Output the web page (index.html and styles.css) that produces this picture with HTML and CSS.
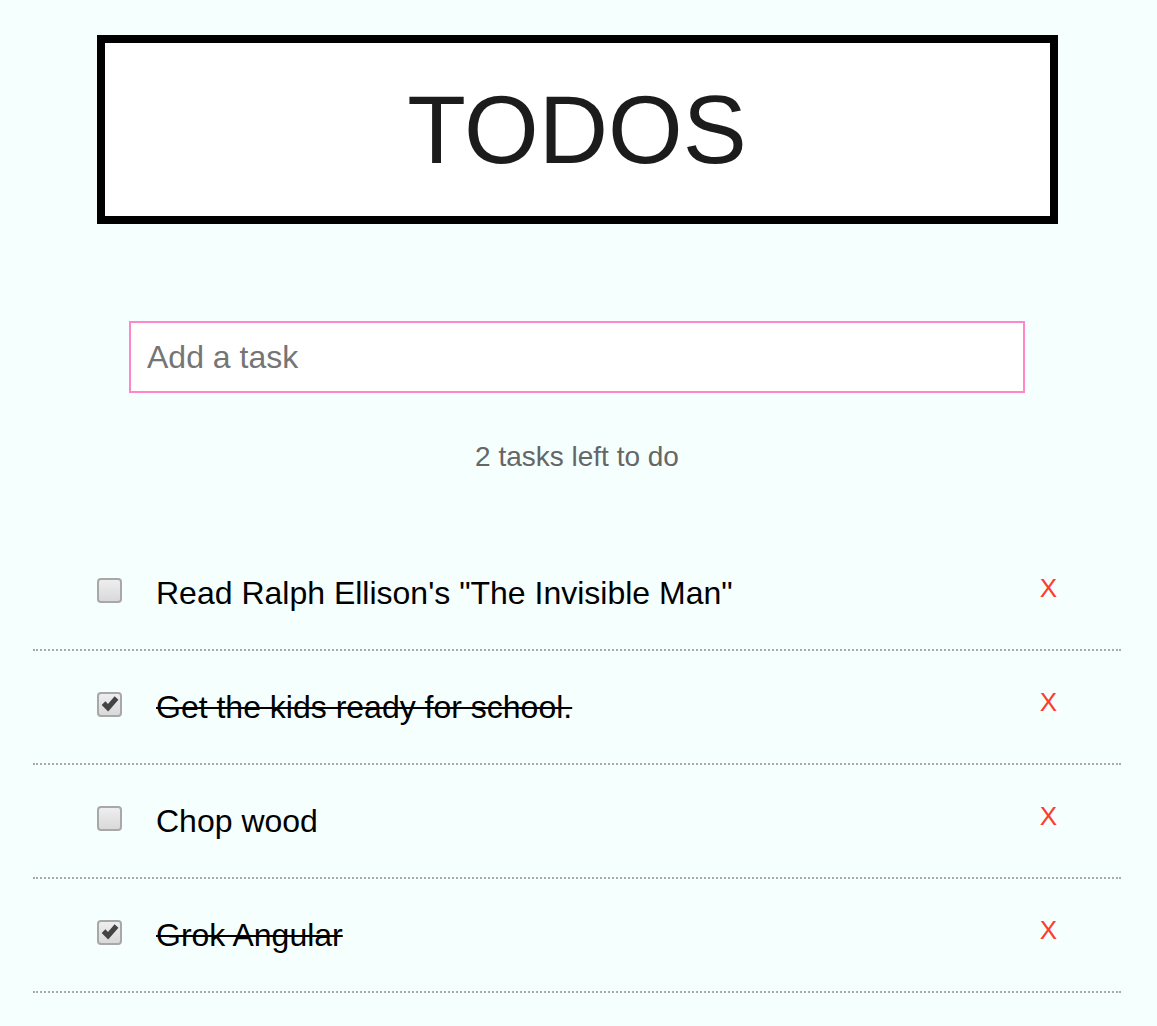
FILE: index.html
```html
<!DOCTYPE html>
<html lang="en">
<head>
<meta charset="utf-8">
<title>Todos</title>
<link rel="stylesheet" href="styles.css">
</head>
<body>
<div class="app">
  <header class="title-box">
    <h1 class="title">TODOS</h1>
  </header>
  <div class="add-row">
    <input class="add-input" type="text" placeholder="Add a task" autofocus>
  </div>
  <p class="count">2 tasks left to do</p>
  <ul class="list">
    <li class="item">
      <span class="check" role="checkbox" aria-checked="false"></span>
      <span class="label">Read Ralph Ellison's "The Invisible Man"</span>
      <button class="remove">X</button>
    </li>
    <li class="item done">
      <span class="check" role="checkbox" aria-checked="true"><svg class="tick" viewBox="0 0 16 16"><path d="M0.6 8.8 L3.9 5.6 L6.2 7.9 L12.1 1.2 L15.5 4.3 L6.4 14.6 Z"/></svg></span>
      <span class="label">Get the kids ready for school.</span>
      <button class="remove">X</button>
    </li>
    <li class="item">
      <span class="check" role="checkbox" aria-checked="false"></span>
      <span class="label">Chop wood</span>
      <button class="remove">X</button>
    </li>
    <li class="item done">
      <span class="check" role="checkbox" aria-checked="true"><svg class="tick" viewBox="0 0 16 16"><path d="M0.6 8.8 L3.9 5.6 L6.2 7.9 L12.1 1.2 L15.5 4.3 L6.4 14.6 Z"/></svg></span>
      <span class="label">Grok Angular</span>
      <button class="remove">X</button>
    </li>
  </ul>
</div>
</body>
</html>
```
FILE: styles.css
```css
html, body {
  margin: 0;
  padding: 0;
  background: #f5fffd;
}
body {
  font-family: "Liberation Sans", Arial, sans-serif;
  color: #000;
}
.app {
  width: 1088px;
  margin: 0 36px 0 33px;
  padding-top: 35px;
  display: flex;
  flex-direction: column;
  align-items: center;
}
.title-box {
  box-sizing: border-box;
  width: 961px;
  height: 189px;
  border: 8px solid #000;
  background: #fff;
  display: flex;
  align-items: center;
  justify-content: center;
}
.title {
  margin: 0;
  font-weight: normal;
  font-size: 96px;
  line-height: 1;
  color: #1c1c1c;
}
.add-row {
  margin-top: 97px;
}
.add-input {
  box-sizing: border-box;
  width: 896px;
  height: 72px;
  border: 2px solid #ff85cc;
  outline: none;
  background: #fff;
  padding: 0 16px;
  font-family: "Liberation Sans", Arial, sans-serif;
  font-size: 32px;
  color: #000;
}
.add-input::placeholder {
  color: #757575;
}
.count {
  margin: 48px 0 0;
  font-size: 28px;
  line-height: 32px;
  color: #666;
}
.list {
  list-style: none;
  margin: 64px 0 0;
  padding: 0;
  width: 1088px;
}
.item {
  box-sizing: border-box;
  height: 114px;
  display: flex;
  align-items: center;
  padding: 0 64px;
  border-bottom: 2px dotted #aaa;
}
.check {
  box-sizing: border-box;
  flex: none;
  width: 25px;
  height: 25px;
  margin: 0 34px 0 0;
  border: 2px solid #a8a8a8;
  border-radius: 4px;
  background: linear-gradient(#eeeeee, #d9d9d9);
  position: relative;
  top: -3px;
  display: flex;
  align-items: center;
  justify-content: center;
}
.tick {
  width: 18px;
  height: 18px;
  fill: #444;
  display: block;
}
.label {
  flex: 1;
  font-size: 32px;
  line-height: 36px;
}
.done .label {
  text-decoration: line-through;
  text-decoration-thickness: 2px;
}
.remove {
  flex: none;
  background: none;
  border: none;
  padding: 0;
  font-family: "Liberation Sans", Arial, sans-serif;
  font-size: 26px;
  line-height: 30px;
  color: #ff3b30;
  position: relative;
  top: -5px;
  cursor: pointer;
}
```
